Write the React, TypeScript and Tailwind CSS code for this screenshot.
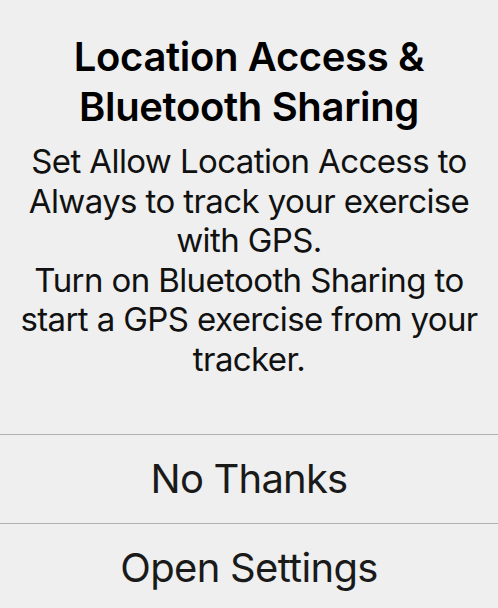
import React from "react";

export default function App() {
  return (
    <div
      className="w-[498px] h-[608px] overflow-hidden bg-[#eeefee] flex flex-col"
      style={{ fontFamily: "Inter, 'Noto Sans', sans-serif" }}
    >
      <div className="shrink-0 pt-[32px] flex flex-col items-center text-center">
        <div className="text-[40px] leading-[50px] font-semibold text-black tracking-[-0.35px] whitespace-nowrap">
          Location Access &amp;
          <br />
          Bluetooth Sharing
        </div>
        <div className="mt-[10px] text-[33px] leading-[39.5px] text-[#111111] tracking-[-0.6px] whitespace-nowrap">
          Set Allow Location Access to
          <br />
          Always to track your exercise
          <br />
          with GPS.
          <br />
          Turn on Bluetooth Sharing to
          <br />
          start a GPS exercise from your
          <br />
          tracker.
        </div>
      </div>
      <div className="shrink-0 mt-[55px] border-t border-[#b0b0b0] h-[89px] flex items-center justify-center text-[40px] text-[#1a1a1a] tracking-[-0.8px]">
        No Thanks
      </div>
      <div className="shrink-0 border-t border-[#b0b0b0] h-[89px] flex items-center justify-center text-[40px] text-[#1a1a1a] tracking-[-0.7px]">
        Open Settings
      </div>
    </div>
  );
}
